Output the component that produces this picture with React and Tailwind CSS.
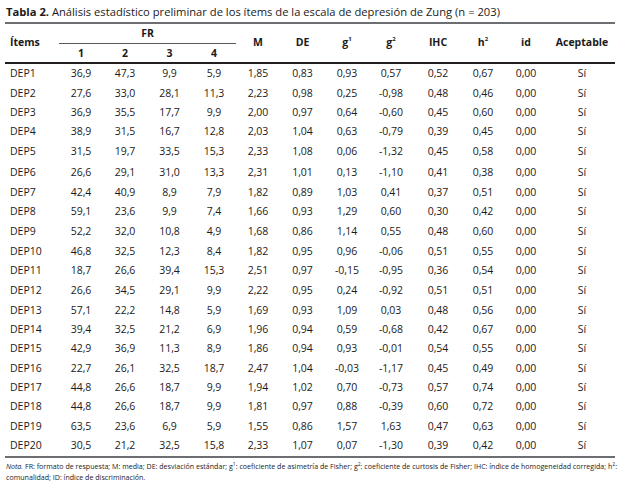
import React from "react";

const rows = [
  ["DEP1", "36,9", "47,3", "9,9", "5,9", "1,85", "0,83", "0,93", "0,57", "0,52", "0,67", "0,00", "Sí"],
  ["DEP2", "27,6", "33,0", "28,1", "11,3", "2,23", "0,98", "0,25", "-0,98", "0,48", "0,46", "0,00", "Sí"],
  ["DEP3", "36,9", "35,5", "17,7", "9,9", "2,00", "0,97", "0,64", "-0,60", "0,45", "0,60", "0,00", "Sí"],
  ["DEP4", "38,9", "31,5", "16,7", "12,8", "2,03", "1,04", "0,63", "-0,79", "0,39", "0,45", "0,00", "Sí"],
  ["DEP5", "31,5", "19,7", "33,5", "15,3", "2,33", "1,08", "0,06", "-1,32", "0,45", "0,58", "0,00", "Sí"],
  ["DEP6", "26,6", "29,1", "31,0", "13,3", "2,31", "1,01", "0,13", "-1,10", "0,41", "0,38", "0,00", "Sí"],
  ["DEP7", "42,4", "40,9", "8,9", "7,9", "1,82", "0,89", "1,03", "0,41", "0,37", "0,51", "0,00", "Sí"],
  ["DEP8", "59,1", "23,6", "9,9", "7,4", "1,66", "0,93", "1,29", "0,60", "0,30", "0,42", "0,00", "Sí"],
  ["DEP9", "52,2", "32,0", "10,8", "4,9", "1,68", "0,86", "1,14", "0,55", "0,48", "0,60", "0,00", "Sí"],
  ["DEP10", "46,8", "32,5", "12,3", "8,4", "1,82", "0,95", "0,96", "-0,06", "0,51", "0,55", "0,00", "Sí"],
  ["DEP11", "18,7", "26,6", "39,4", "15,3", "2,51", "0,97", "-0,15", "-0,95", "0,36", "0,54", "0,00", "Sí"],
  ["DEP12", "26,6", "34,5", "29,1", "9,9", "2,22", "0,95", "0,24", "-0,92", "0,51", "0,51", "0,00", "Sí"],
  ["DEP13", "57,1", "22,2", "14,8", "5,9", "1,69", "0,93", "1,09", "0,03", "0,48", "0,56", "0,00", "Sí"],
  ["DEP14", "39,4", "32,5", "21,2", "6,9", "1,96", "0,94", "0,59", "-0,68", "0,42", "0,67", "0,00", "Sí"],
  ["DEP15", "42,9", "36,9", "11,3", "8,9", "1,86", "0,94", "0,93", "-0,01", "0,54", "0,55", "0,00", "Sí"],
  ["DEP16", "22,7", "26,1", "32,5", "18,7", "2,47", "1,04", "-0,03", "-1,17", "0,45", "0,49", "0,00", "Sí"],
  ["DEP17", "44,8", "26,6", "18,7", "9,9", "1,94", "1,02", "0,70", "-0,73", "0,57", "0,74", "0,00", "Sí"],
  ["DEP18", "44,8", "26,6", "18,7", "9,9", "1,81", "0,97", "0,88", "-0,39", "0,60", "0,72", "0,00", "Sí"],
  ["DEP19", "63,5", "23,6", "6,9", "5,9", "1,55", "0,86", "1,57", "1,63", "0,47", "0,63", "0,00", "Sí"],
  ["DEP20", "30,5", "21,2", "32,5", "15,8", "2,33", "1,07", "0,07", "-1,30", "0,39", "0,42", "0,00", "Sí"],
];

// row heights read off the scan (rows are not perfectly even)
const heights = {
  19: "h-[19px]",
  20: "h-[20px]",
  21: "h-[21px]",
};
const rowH = [21, 19, 19, 19, 21, 21, 19, 19, 21, 19, 19, 20, 20, 19, 19, 20, 19, 19, 20, 19];

const cols = "grid grid-cols-[54px_44px_44px_45px_44px_44px_45px_44px_44px_50px_40px_46px_66px]";

const Sup = ({ children, small }) => (
  <span
    className={`inline-block align-top leading-none ${small ? "text-[5px] mt-[1px]" : "text-[6px] mt-[1px]"}`}
  >
    {children}
  </span>
);

export default function App() {
  return (
    <div className="w-[631px] h-[485px] bg-white text-[#1c1a1b] font-['Liberation_Sans_Narrow','Open_Sans',sans-serif] overflow-hidden">
      {/* Title */}
      <div className="pt-[5px] pl-[6px] text-[11.2px] leading-[14px] whitespace-nowrap">
        <span className="font-bold">Tabla 2.</span> Análisis estadístico preliminar de los ítems de la escala de depresión de Zung (n = 203)
      </div>

      <div className="w-[610px] ml-[5px] mt-[3px]">
        <div className="h-[2px] bg-[#6d6e71]" />

        {/* Header */}
        <div className={`${cols} grid-rows-[19px_1px_18px] text-[10.5px] font-bold`}>
          <div className="row-span-3 flex items-center pl-[5px]">Ítems</div>
          <div className="col-span-4 flex items-center justify-center">FR</div>
          <div className="row-span-3 flex items-center justify-center">M</div>
          <div className="row-span-3 flex items-center justify-center">DE</div>
          <div className="row-span-3 flex items-center justify-center">
            <span>g<Sup>1</Sup></span>
          </div>
          <div className="row-span-3 flex items-center justify-center">
            <span>g<Sup>2</Sup></span>
          </div>
          <div className="row-span-3 flex items-center justify-center">IHC</div>
          <div className="row-span-3 flex items-center justify-center">
            <span>h<Sup>2</Sup></span>
          </div>
          <div className="row-span-3 flex items-center justify-center">id</div>
          <div className="row-span-3 flex items-center justify-center">Aceptable</div>
          <div className="col-span-4 bg-[#58595b]" />
          <div className="flex items-center justify-center pt-[2px]">1</div>
          <div className="flex items-center justify-center pt-[2px]">2</div>
          <div className="flex items-center justify-center pt-[2px]">3</div>
          <div className="flex items-center justify-center pt-[2px]">4</div>
        </div>
        <div className="h-[1.5px] bg-[#231f20]" />

        {/* Body */}
        <div className="text-[10.5px]">
          {rows.map((r, i) => (
            <div key={r[0]} className={`${cols} ${heights[rowH[i]]} items-center`}>
              <div className="pl-[5px]">{r[0]}</div>
              {r.slice(1).map((v, j) => (
                <div key={j} className="text-center">
                  {v}
                </div>
              ))}
            </div>
          ))}
        </div>
        <div className="h-[2px] bg-[#6d6e71]" />
      </div>

      {/* Note */}
      <div className="pl-[6px] pt-[3px] text-[7.1px] leading-[11px] whitespace-nowrap">
        <div>
          <span className="italic">Nota.</span> FR: formato de respuesta; M: media; DE: desviación estándar; g<Sup small>1</Sup>: coeficiente de asimetría de Fisher; g<Sup small>2</Sup>: coeficiente de curtosis de Fisher; IHC: índice de homogeneidad corregida; h<Sup small>2</Sup>:
        </div>
        <div>comunalidad; ID: índice de discriminación.</div>
      </div>
    </div>
  );
}
